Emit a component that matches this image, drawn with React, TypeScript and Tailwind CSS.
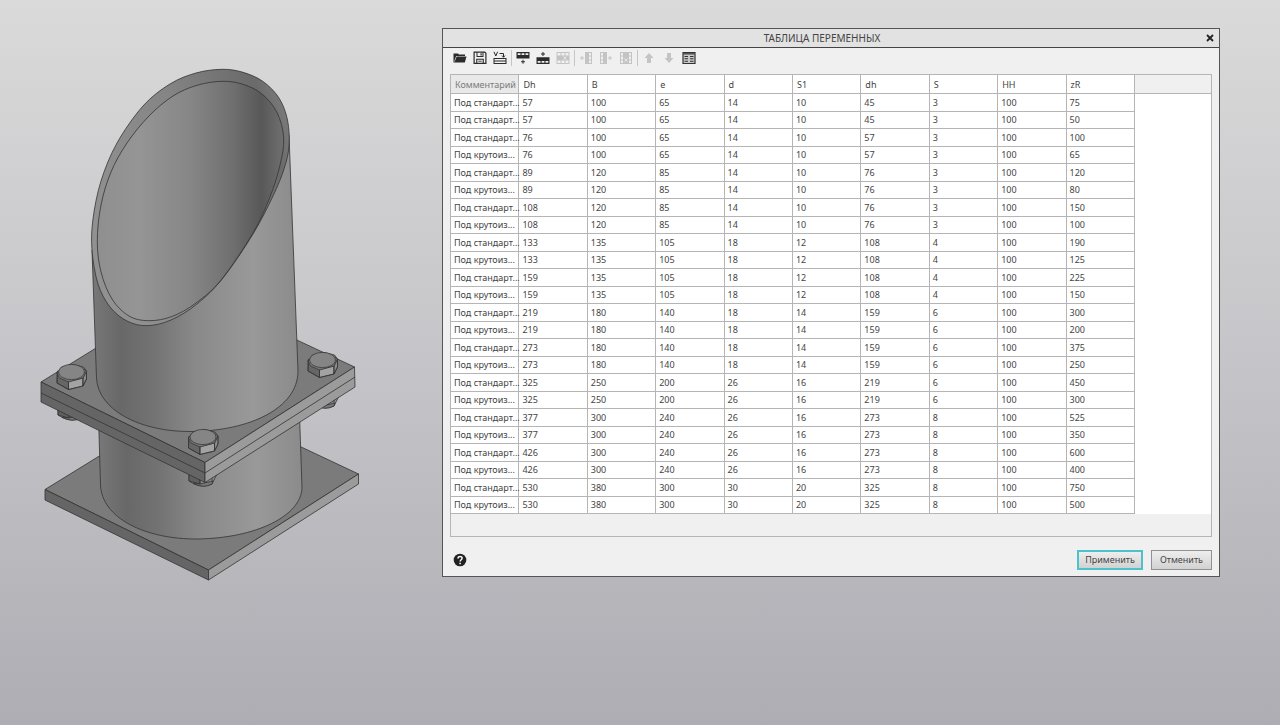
import { type ButtonHTMLAttributes, type ReactNode } from "react";
import { clsx } from "clsx";

type Point = [number, number];

const columns = ["Комментарий", "Dh", "B", "e", "d", "S1", "dh", "S", "HH", "zR"];

const STANDARD = "Под стандарт...";
const STEEP = "Под крутоиз...";

const rows: number[][] = [
  [57, 100, 65, 14, 10, 45, 3, 100, 75],
  [57, 100, 65, 14, 10, 45, 3, 100, 50],
  [76, 100, 65, 14, 10, 57, 3, 100, 100],
  [76, 100, 65, 14, 10, 57, 3, 100, 65],
  [89, 120, 85, 14, 10, 76, 3, 100, 120],
  [89, 120, 85, 14, 10, 76, 3, 100, 80],
  [108, 120, 85, 14, 10, 76, 3, 100, 150],
  [108, 120, 85, 14, 10, 76, 3, 100, 100],
  [133, 135, 105, 18, 12, 108, 4, 100, 190],
  [133, 135, 105, 18, 12, 108, 4, 100, 125],
  [159, 135, 105, 18, 12, 108, 4, 100, 225],
  [159, 135, 105, 18, 12, 108, 4, 100, 150],
  [219, 180, 140, 18, 14, 159, 6, 100, 300],
  [219, 180, 140, 18, 14, 159, 6, 100, 200],
  [273, 180, 140, 18, 14, 159, 6, 100, 375],
  [273, 180, 140, 18, 14, 159, 6, 100, 250],
  [325, 250, 200, 26, 16, 219, 6, 100, 450],
  [325, 250, 200, 26, 16, 219, 6, 100, 300],
  [377, 300, 240, 26, 16, 273, 8, 100, 525],
  [377, 300, 240, 26, 16, 273, 8, 100, 350],
  [426, 300, 240, 26, 16, 273, 8, 100, 600],
  [426, 300, 240, 26, 16, 273, 8, 100, 400],
  [530, 380, 300, 30, 20, 325, 8, 100, 750],
  [530, 380, 300, 30, 20, 325, 8, 100, 500],
];

// the second row is a standard bend too, after that they alternate
const comment = (index: number) =>
  index === 1 || index % 2 === 0 ? STANDARD : STEEP;

/* ---------- 3D model ---------- */

// closed Catmull-Rom curve through the points
const smooth = (points: Point[]) => {
  const n = points.length;
  const at = (i: number) => points[(i + n) % n];
  let d = `M${points[0].join(" ")}`;
  for (let i = 0; i < n; i++) {
    const [p0, p1, p2, p3] = [at(i - 1), at(i), at(i + 1), at(i + 2)];
    d += `C${p1[0] + (p2[0] - p0[0]) / 6} ${p1[1] + (p2[1] - p0[1]) / 6} ${
      p2[0] - (p3[0] - p1[0]) / 6
    } ${p2[1] - (p3[1] - p1[1]) / 6} ${p2[0]} ${p2[1]}`;
  }
  return d + "Z";
};

const rimOuter = smooth([
  [222, 69.3], [243, 72.3], [263, 81.5], [279, 98], [287.5, 120], [289, 146],
  [284, 169], [273, 196], [253, 234], [223, 278], [197, 304], [171, 320],
  [147, 325.7], [127, 321], [110, 307], [98, 284], [92, 250], [93, 219],
  [101, 181], [117, 143], [143, 106], [170, 84], [196, 73],
]);

const rimInner = smooth([
  [222, 81.3], [243, 84.3], [262, 94], [277, 112.5], [283.7, 138], [280, 165],
  [270, 197], [253, 233], [221, 280], [196, 303], [172, 316.5], [149, 320.7],
  [129, 316], [112, 299], [101, 272], [97.3, 241], [101, 205], [111, 172],
  [127, 143], [149, 116], [173, 96], [197, 85.3],
]);

const Bolt = ({ x, y }: { x: number; y: number }) => (
  <g transform={`translate(${x} ${y})`} strokeWidth="0.7">
    <path d="M-14 -1L-3 7V17.5L-14.5 11Z" fill="#666666" />
    <path d="M-3 9.5L11.5 6V14L-3 17.5Z" fill="#a3a3a3" />
    <path d="M11.5 6L15 -1V7L11.5 14Z" fill="#8c8c8c" />
    <path d="M-14.5 1L-10 -5L2 -7.5L12 -5L15 -1L11.5 6L-3 10L-12 6Z" fill="#777777" />
    <ellipse rx="13" ry="7.6" fill="#858585" />
    <path
      d="M-14.5 0V11L-3 17.5L11.5 14L15 7V-1L12.5 -3M-3 9.5V17.5M11.5 6V14"
      fill="none"
    />
  </g>
);

const Nut = ({ x, y }: { x: number; y: number }) => (
  <g transform={`translate(${x} ${y})`}>
    <path d="M-14 -14V-2L-9 1Q0 5 9 1L14 -9V-14Z" fill="#8f8f8f" />
    <path d="M-14 -14V-2L-3 1V-14Z" fill="#5f5f5f" />
    <path d="M-10 0Q0 6 9 1L10 -2L-3 1Z" fill="#777" />
    <path d="M-3 1V-9M9 -2V-9" fill="none" />
  </g>
);

const PipeModel = () => (
  <svg
    viewBox="38 66 324 518"
    className="mt-[66px] ml-[38px] w-[324px] shrink-0"
    role="img"
    aria-label="3D"
    stroke="#333"
    strokeWidth="0.8"
    strokeLinejoin="round"
  >
    <defs>
      <linearGradient id="outside">
        <stop offset="0" stopColor="#787878" />
        <stop offset="0.14" stopColor="#686868" />
        <stop offset="0.3" stopColor="#737373" />
        <stop offset="0.5" stopColor="#898989" />
        <stop offset="0.78" stopColor="#999999" />
        <stop offset="1" stopColor="#8b8b8b" />
      </linearGradient>
      <linearGradient id="inside">
        <stop offset="0" stopColor="#8f8f8f" />
        <stop offset="0.22" stopColor="#959595" />
        <stop offset="0.5" stopColor="#868686" />
        <stop offset="0.72" stopColor="#707070" />
        <stop offset="0.88" stopColor="#585858" />
        <stop offset="1" stopColor="#707070" />
      </linearGradient>
      <linearGradient id="rim" x1="0" y1="0.6" x2="1" y2="0.2">
        <stop offset="0" stopColor="#919191" />
        <stop offset="0.5" stopColor="#858585" />
        <stop offset="0.9" stopColor="#6a6a6a" />
        <stop offset="1" stopColor="#7a7a7a" />
      </linearGradient>
    </defs>

    {/* base plate */}
    <path d="M45 489.5L195 397L358.5 474L208.5 570Z" fill="#7b7b7b" />
    <path d="M45 489.5L208.5 570V580L45 500Z" fill="#656565" />
    <path d="M208.5 570L358.5 474V484L208.5 580Z" fill="#9b9b9b" />

    {/* lower pipe */}
    <path
      d="M98 400L100.5 484C101 518 145 539.5 198 539C256 538 301 516 302 488L299 400Z"
      fill="url(#outside)"
    />

    <Nut x={72} y={417} />
    <Nut x={325} y={405} />
    <Nut x={203} y={483} />

    {/* flange pair */}
    <path d="M41 382L190 290L354.5 367L205 462.5Z" fill="#7b7b7b" />
    <path d="M41 382L205 462.5V482.5L41 402Z" fill="#656565" />
    <path d="M205 462.5L354.5 367L355 387L205 482.5Z" fill="#9b9b9b" />
    <path d="M41 393L205 473L355 377" fill="none" />

    {/* upper pipe */}
    <path
      d="M92 250L96.5 378C98 410 140 432 191 431.5C250 431 298 408 298 371L289 135L180 220Z"
      fill="url(#outside)"
    />
    <path d={rimOuter} fill="url(#rim)" />
    <path d={rimInner} fill="url(#inside)" />

    <Bolt x={71.5} y={372} />
    <Bolt x={322.5} y={360} />
    <Bolt x={203} y={437} />
  </svg>
);

/* ---------- toolbar ---------- */

type ToolProps = {
  label: string;
  children: ReactNode;
} & ButtonHTMLAttributes<HTMLButtonElement>;

const Tool = ({ label, children, ...props }: ToolProps) => (
  <button
    {...props}
    type="button"
    aria-label={label}
    className="flex h-5 w-5 items-center justify-center text-[#2b2b2b] disabled:text-[#c4c4c4]"
  >
    <svg viewBox="0 0 14 14" className="h-3.5 w-3.5" fill="currentColor">
      {children}
    </svg>
  </button>
);

const Divider = () => (
  <div className="flex w-[3px] justify-center">
    <div className="h-4 w-px bg-[#c6c6c6]" />
  </div>
);

const Plus = ({ x, y }: { x: number; y: number }) => (
  <path d={`M${x - 2} ${y - 0.5}h1.5v-1.5h1v1.5h1.5v1h-1.5v1.5h-1v-1.5h-1.5z`} />
);

const Toolbar = () => (
  <div className="mb-[7px] flex h-[19px] items-center" role="toolbar">
    <Tool label="Открыть">
      <path d="M0.5 11.5V2.5H5L6 3.5H12V5H3.2L1.5 9.5V11.5Z" />
      <path d="M3.6 5.6H13.5L11.8 11.5H1.4Z" />
    </Tool>
    <Tool label="Сохранить">
      <path
        d="M0.5 0.5H12L13.5 2V13H0.5ZM1.7 1.7V11.8H12.3V2.5L11.5 1.7H10.5V6H3.5V1.7ZM4.5 1.7V5H9.5V1.7ZM7.5 2.2H8.7V4.5H7.5ZM3.2 7.7H10.8V11.8H3.2ZM4.3 8.8V11.8H9.7V8.8Z"
        fillRule="evenodd"
      />
      <path d="M5.2 10.2H8.8" stroke="currentColor" strokeWidth="0.8" />
    </Tool>
    <Tool label="Считать переменные">
      <path d="M1 0.8L2.8 5L4.6 0.8M6.5 2.5H10.5V6M9 4.6L10.5 6.3L12 4.6" fill="none" stroke="currentColor" />
      <path d="M0.5 7H13.5V13H0.5ZM1.5 8V9.5H12.5V8ZM1.5 10.5V12H12.5V10.5Z" fillRule="evenodd" />
    </Tool>
    <Divider />
    <Tool label="Добавить строку ниже">
      <path
        d="M0.5 1H13.5V7.5H0.5ZM1.7 2.2V4H4.5V2.2ZM5.6 2.2V4H8.4V2.2ZM9.5 2.2V4H12.3V2.2Z"
        fillRule="evenodd"
      />
      <Plus x={7} y={10.7} />
    </Tool>
    <Tool label="Добавить строку выше">
      <Plus x={7} y={3} />
      <path
        d="M0.5 6.2H13.5V13H0.5ZM1.7 10V11.8H4.5V10ZM5.6 10V11.8H8.4V10ZM9.5 10V11.8H12.3V10Z"
        fillRule="evenodd"
      />
    </Tool>
    <Tool label="Удалить строку" disabled>
      <path
        d="M0.5 1H13.5V13H0.5ZM1.5 2V4.5H4.5V2ZM5.5 2V4.5H8.5V2ZM9.5 2V4.5H12.5V2ZM1.5 9.5V12H4.5V9.5ZM5.5 9.5V12H8.5V9.5ZM9.5 9.5V12H12.5V9.5Z"
        fillRule="evenodd"
      />
      <path d="M7.5 5.3L10.5 8.7M10.5 5.3L7.5 8.7" stroke="#f0f0f0" strokeWidth="0.8" />
    </Tool>
    <Divider />
    <Tool label="Добавить столбец слева" disabled>
      <Plus x={3} y={7} />
      <path
        d="M6 1H13V13H6ZM10 2V4.5H12V2ZM10 5.5V8.5H12V5.5ZM10 9.5V12H12V9.5Z"
        fillRule="evenodd"
      />
    </Tool>
    <Tool label="Добавить столбец справа" disabled>
      <path
        d="M1 1H8V13H1ZM2 2V4.5H4V2ZM2 5.5V8.5H4V5.5ZM2 9.5V12H4V9.5Z"
        fillRule="evenodd"
      />
      <Plus x={11} y={7} />
    </Tool>
    <Tool label="Удалить столбец" disabled>
      <path
        d="M1 1H13V13H1ZM2 2V4.5H4V2ZM2 5.5V8.5H4V5.5ZM2 9.5V12H4V9.5ZM10 2V4.5H12V2ZM10 5.5V8.5H12V5.5ZM10 9.5V12H12V9.5Z"
        fillRule="evenodd"
      />
      <path d="M5.4 7.5L8.6 10.7M8.6 7.5L5.4 10.7" stroke="#f0f0f0" strokeWidth="0.8" />
    </Tool>
    <Divider />
    <Tool label="Переместить вверх" disabled>
      <path d="M7 2L11.5 7H9V12H5V7H2.5Z" />
    </Tool>
    <Tool label="Переместить вниз" disabled>
      <path d="M7 12L11.5 7H9V2H5V7H2.5Z" />
    </Tool>
    <Tool label="Свойства таблицы">
      <path d="M1 1.5H13V12.5H1Z" fill="#c8c8c8" stroke="#333" strokeWidth="1.2" />
      <path d="M1 2.8H13" stroke="#555" strokeWidth="1.6" />
      <path d="M2.5 5.5H6M8 5.5H11.5M2.5 7.8H6M8 7.8H11.5M2.5 10.2H6M8 10.2H11.5" stroke="#333" strokeWidth="1.1" />
    </Tool>
  </div>
);

/* ---------- table ---------- */

const VariablesTable = () => (
  <div className="border border-[#b5b5b5] pb-[22px]">
    <table className="w-full table-fixed border-separate border-spacing-0 text-left">
      <thead>
        <tr className="h-[19px]">
          {columns.map((name, i) => (
            <th
              key={name}
              className={clsx(
                "w-[9%] border-r border-b border-[#b5b5b5] p-0 pt-px pl-1 font-normal",
                i === 0 ? "bg-[#e9e9e9] text-[#7b7b7b]" : "bg-white",
              )}
            >
              {name}
            </th>
          ))}
          <td className="border-b border-[#b5b5b5] p-0" />
        </tr>
      </thead>
      <tbody className="bg-white">
        {rows.map((row, i) => (
          <tr key={i} className="odd:h-[18px] even:h-[17px]">
            {[comment(i), ...row].map((value, j) => (
              <td
                key={j}
                className="border-r border-b border-[#b5b5b5] p-0 pl-[3px] whitespace-nowrap"
              >
                {value}
              </td>
            ))}
            <td className="p-0" />
          </tr>
        ))}
      </tbody>
    </table>
  </div>
);

const VariablesDialog = () => (
  <section
    role="dialog"
    aria-labelledby="dialog-title"
    className="mt-7 mr-[60px] ml-20 min-w-0 flex-1 self-start border border-[#555] bg-[#f0f0f0]"
  >
    <header className="flex h-[19px] items-center border-b border-[#444] bg-[#e2e2e2]">
      <h1 id="dialog-title" className="flex-1 text-center text-[10px]">
        ТАБЛИЦА ПЕРЕМЕННЫХ
      </h1>
      <button type="button" aria-label="Закрыть" className="flex w-[18px] justify-center">
        <svg viewBox="0 0 8 8" className="h-2 w-2" stroke="#222" strokeWidth="1.8">
          <path d="M1 1L7 7M7 1L1 7" />
        </svg>
      </button>
    </header>
    <div className="px-[7px]">
      <Toolbar />
      <VariablesTable />
      <footer className="flex items-center gap-2 pt-[13px] pb-[6px]">
        <button type="button" aria-label="Справка" className="mr-auto ml-[3px]">
          <svg viewBox="0 0 14 14" className="h-3.5 w-3.5">
            <circle cx="7" cy="7" r="6.3" fill="#222" />
            <path
              d="M5 5.4C5 2.8 9.2 2.9 9.1 5.3C9 6.8 7.1 6.8 7.1 8.6M7.1 9.8V11.2"
              fill="none"
              stroke="#fff"
              strokeWidth="1.5"
            />
          </svg>
        </button>
        <button
          type="button"
          className="h-5 border-2 border-[#4cc3cc] bg-linear-to-b from-[#eeeeee] to-[#d2d2d2] px-[6px]"
        >
          Применить
        </button>
        <button
          type="button"
          className="h-5 border border-[#919191] bg-linear-to-b from-[#eeeeee] to-[#d2d2d2] px-[8px]"
        >
          Отменить
        </button>
      </footer>
    </div>
  </section>
);

export default function App() {
  return (
    <main className="flex min-h-screen items-start bg-linear-to-b from-[#dadada] via-[#c5c5c9] to-[#adadb3] font-['Noto_Sans','Open_Sans',sans-serif] text-[9px] leading-3 text-[#444]">
      <PipeModel />
      <VariablesDialog />
    </main>
  );
}
